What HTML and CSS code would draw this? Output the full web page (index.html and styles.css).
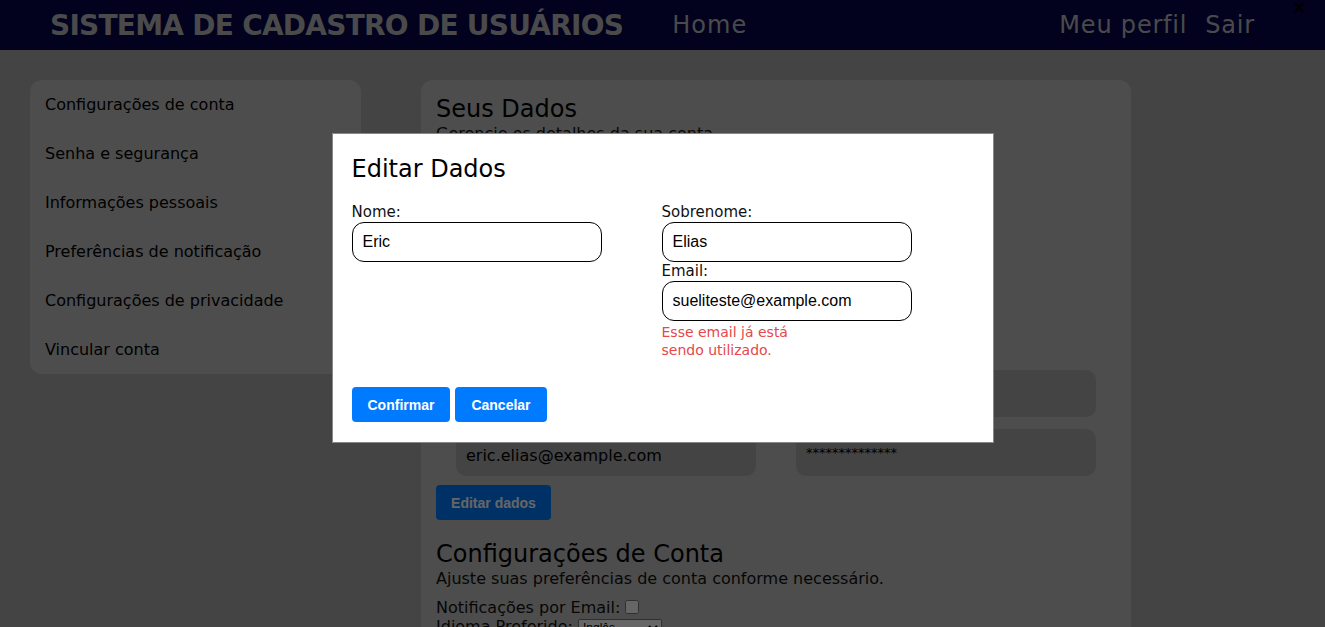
FILE: index.html
```html
<!DOCTYPE html>
<html lang="pt-BR">
<head>
<meta charset="utf-8">
<title>Sistema de Cadastro de Usuários</title>
<link rel="stylesheet" href="styles.css">
</head>
<body>
<header class="topbar">
  <div class="brand">SISTEMA DE CADASTRO DE USUÁRIOS</div>
  <nav class="nav-left"><a href="#">Home</a></nav>
  <nav class="nav-right"><a href="#">Meu perfil</a><a href="#">Sair</a></nav>
</header>

<main class="layout">
  <aside class="sidebar">
    <a class="side-item" href="#">Configurações de conta</a>
    <a class="side-item" href="#">Senha e segurança</a>
    <a class="side-item" href="#">Informações pessoais</a>
    <a class="side-item" href="#">Preferências de notificação</a>
    <a class="side-item" href="#">Configurações de privacidade</a>
    <a class="side-item" href="#">Vincular conta</a>
  </aside>

  <section class="card">
    <h2 class="card-title">Seus Dados</h2>
    <p class="card-sub">Gerencie os detalhes da sua conta</p>

    <div class="profile">
      <div class="avatar"></div>
      <div class="profile-name">Eric Elias</div>
    </div>

    <div class="fields">
      <div class="field">Eric</div>
      <div class="field">Elias</div>
      <div class="field">eric.elias@example.com</div>
      <div class="field field-pass">**************</div>
    </div>
    <button class="btn btn-edit" type="button">Editar dados</button>

    <h2 class="card-title section-2">Configurações de Conta</h2>
    <p class="card-sub">Ajuste suas preferências de conta conforme necessário.</p>
    <div class="pref">Notificações por Email: <input type="checkbox" class="check"></div>
    <div class="pref">Idioma Preferido: <select class="select"><option>Inglês</option><option>Português</option></select></div>
    <div class="pref">Fuso Horário: <select class="select"><option>UTC-3</option></select></div>
  </section>
</main>

<div class="overlay">
  <span class="close">×</span>
  <div class="modal">
    <h2 class="modal-title">Editar Dados</h2>
    <div class="modal-grid">
      <div class="col">
        <label class="lbl">Nome:</label>
        <input class="inp" type="text" value="Eric">
      </div>
      <div class="col">
        <label class="lbl">Sobrenome:</label>
        <input class="inp" type="text" value="Elias">
        <label class="lbl">Email:</label>
        <input class="inp" type="text" value="sueliteste@example.com">
        <p class="err">Esse email já está sendo utilizado.</p>
      </div>
    </div>
    <div class="actions">
      <button class="btn btn-confirm" type="button">Confirmar</button>
      <button class="btn btn-cancel" type="button">Cancelar</button>
    </div>
  </div>
</div>
</body>
</html>
```
FILE: styles.css
```css
* { box-sizing: border-box; }

html, body {
  margin: 0;
  padding: 0;
}

body {
  background: #aaaaaa;
  font-family: "DejaVu Sans", sans-serif;
  color: #000;
  overflow: hidden;
  height: 627px;
}

a { text-decoration: none; color: inherit; }

.topbar {
  height: 50px;
  background: #05054e;
  display: flex;
  align-items: center;
  padding-left: 50px;
  padding-right: 70px;
  color: #bababa;
}

.brand {
  font-size: 28px;
  font-weight: 600;
  letter-spacing: -0.75px;
  white-space: nowrap;
}

.nav-left {
  margin-left: 49px;
  font-size: 24px;
  letter-spacing: 1.1px;
  flex: 1;
}

.nav-right {
  display: flex;
  gap: 18px;
  font-size: 24px;
  letter-spacing: 0.8px;
}

.layout {
  display: flex;
  align-items: flex-start;
  gap: 60px;
  padding: 30px 0 0 30px;
}

.sidebar {
  width: 331px;
  background: #c0c0c0;
  border-radius: 12px;
  display: flex;
  flex-direction: column;
}

.side-item {
  height: 49px;
  display: flex;
  align-items: center;
  padding-left: 15px;
  font-size: 16px;
  color: #000;
}

.card {
  width: 710px;
  background: #c0c0c0;
  border-radius: 12px;
  padding: 15px 15px 40px;
}

.card-title {
  margin: 0;
  font-size: 24px;
  font-weight: 400;
  line-height: 29px;
}

.card-sub {
  margin: 0;
  font-size: 16px;
  line-height: 19px;
  color: #111;
}

.profile {
  height: 227px;
  display: flex;
  flex-direction: column;
  align-items: center;
  justify-content: center;
  gap: 10px;
}

.avatar {
  width: 120px;
  height: 120px;
  border-radius: 50%;
  background: #aaaaaa;
}

.profile-name { font-size: 18px; }

.fields {
  display: grid;
  grid-template-columns: 300px 300px;
  column-gap: 40px;
  row-gap: 12px;
  padding-left: 20px;
}

.field {
  height: 47px;
  background: #aaaaaa;
  border-radius: 10px;
  padding: 17px 10px 0;
  font-size: 16px;
  line-height: 20px;
}

.field-pass {
  font-size: 13px;
  padding-top: 14px;
}

.btn {
  border: none;
  border-radius: 4px;
  background: #007bff;
  color: #fff;
  font-family: "Liberation Sans", Arial, sans-serif;
  font-weight: 700;
  font-size: 14px;
  height: 35px;
  padding: 0 16px;
  cursor: pointer;
}

.btn-edit {
  margin-top: 9px;
  width: 115px;
  padding: 0;
}

.section-2 { margin-top: 20px; }

.pref {
  font-size: 16px;
  line-height: 19px;
  color: #111;
}

.card-sub + .pref { margin-top: 10px; }

.check {
  margin: 0;
  width: 14px;
  height: 14px;
  vertical-align: -1px;
}

.select {
  font-size: 12px;
  font-family: "Liberation Sans", Arial, sans-serif;
  width: 84px;
}

/* modal */
.overlay {
  position: fixed;
  inset: 0;
  background: rgba(0, 0, 0, 0.6);
  display: flex;
  justify-content: center;
  align-items: flex-start;
  padding-top: 133px;
}

.close {
  position: absolute;
  top: -3px;
  right: 19px;
  font-family: "DejaVu Sans", sans-serif;
  font-size: 17px;
  font-weight: 700;
  color: #000;
}

.modal {
  width: 662px;
  background: #fff;
  border: 1px solid #888;
  padding: 20px 19px 20px;
}

.modal-title {
  margin: 0;
  font-size: 24px;
  font-weight: 500;
  line-height: 30px;
}

.modal-grid {
  display: grid;
  grid-template-columns: 310px 250px;
  margin-top: 19px;
}

.col {
  display: flex;
  flex-direction: column;
  align-items: flex-start;
}

.lbl {
  font-size: 15px;
  line-height: 18px;
  height: 19px;
  color: #111;
}

.inp {
  width: 250px;
  height: 40px;
  border: 1px solid #000;
  border-radius: 12px;
  padding: 0 10px;
  font-family: "Liberation Sans", Arial, sans-serif;
  font-size: 16px;
  color: #000;
  background: #fff;
  outline: none;
}

.err {
  margin: 2px 0 0;
  width: 150px;
  font-size: 14px;
  line-height: 18px;
  color: #e6474a;
}

.actions {
  display: flex;
  gap: 5px;
  margin-top: 28px;
}
```
